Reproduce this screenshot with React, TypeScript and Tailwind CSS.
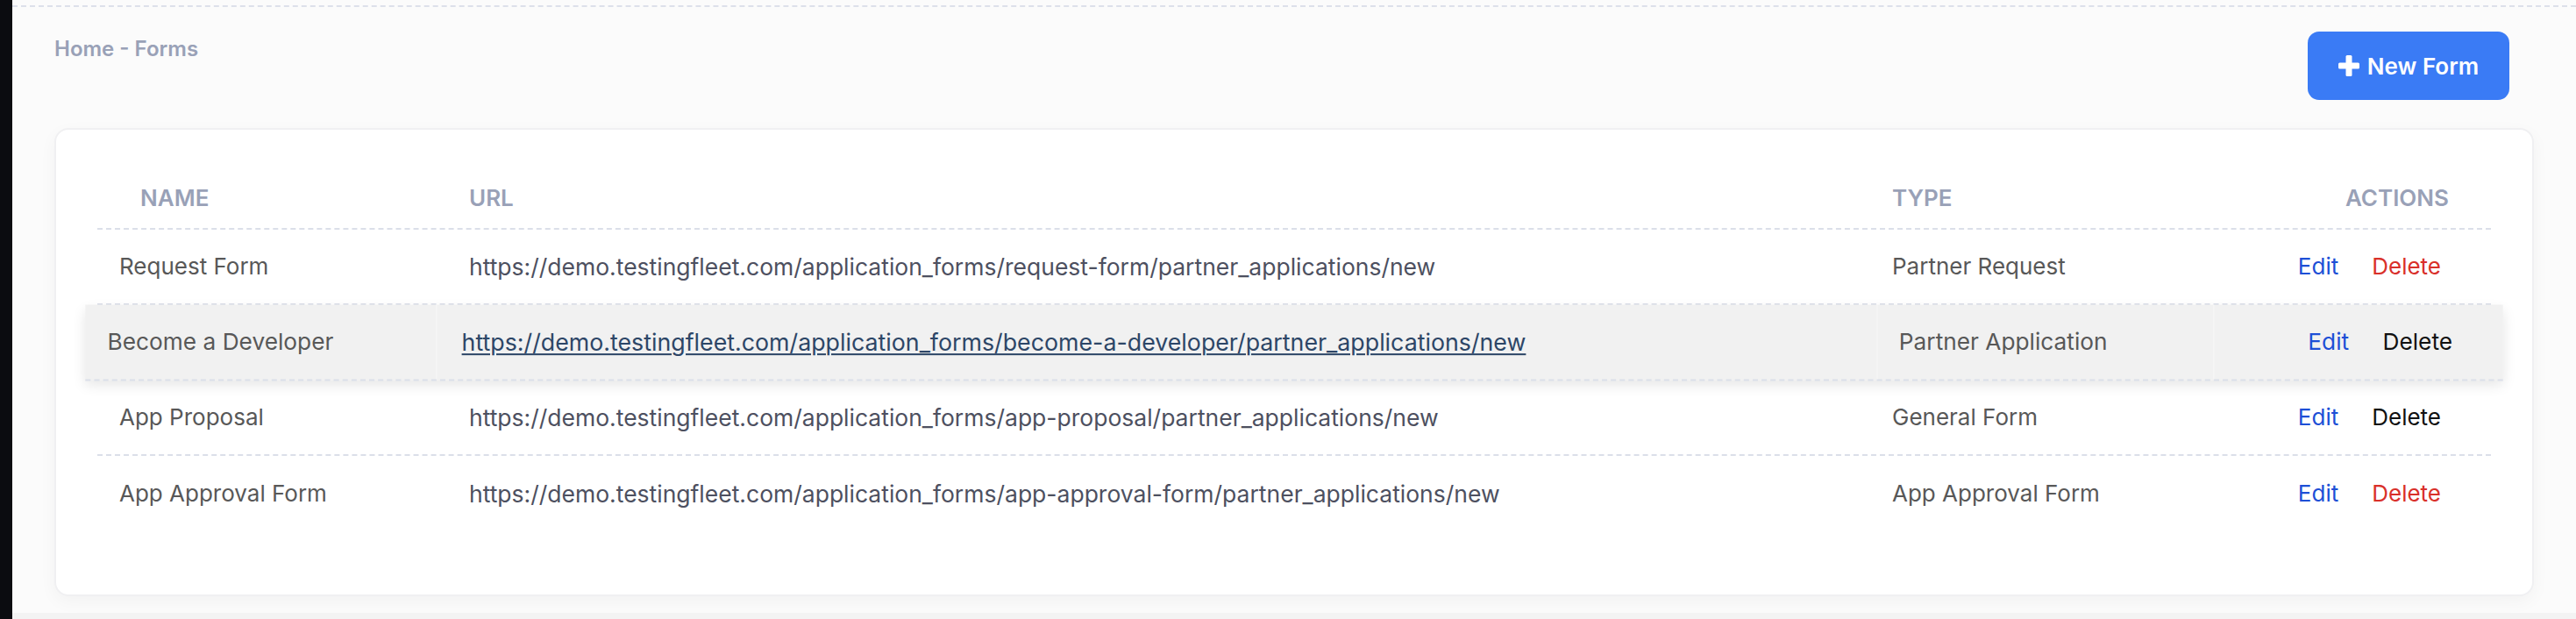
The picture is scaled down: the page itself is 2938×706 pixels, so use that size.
import React from "react";

type FormRow = {
  name: string;
  url: string;
  type: string;
  deleteTone: "red" | "black";
  active?: boolean;
};

const rows: FormRow[] = [
  {
    name: "Request Form",
    url: "https://demo.testingfleet.com/application_forms/request-form/partner_applications/new",
    type: "Partner Request",
    deleteTone: "red",
  },
  {
    name: "Become a Developer",
    url: "https://demo.testingfleet.com/application_forms/become-a-developer/partner_applications/new",
    type: "Partner Application",
    deleteTone: "black",
    active: true,
  },
  {
    name: "App Proposal",
    url: "https://demo.testingfleet.com/application_forms/app-proposal/partner_applications/new",
    type: "General Form",
    deleteTone: "black",
  },
  {
    name: "App Approval Form",
    url: "https://demo.testingfleet.com/application_forms/app-approval-form/partner_applications/new",
    type: "App Approval Form",
    deleteTone: "red",
  },
];

function PlusIcon() {
  return (
    <svg width="24" height="24" viewBox="0 0 24 24" aria-hidden="true">
      <rect x="8.5" y="0" width="7" height="24" rx="1.5" fill="#ffffff" />
      <rect x="0" y="8.5" width="24" height="7" rx="1.5" fill="#ffffff" />
    </svg>
  );
}

function Row({ row, last }: { row: FormRow; last: boolean }) {
  const base =
    "grid grid-cols-[396px_1627px_380px_326px] h-[86px] items-center text-[26px] leading-[32px]";
  const border = last ? "" : "border-b-2 border-dashed border-[#dbdfe9]";
  const active = row.active
    ? "bg-[#f1f1f1] scale-[1.01] shadow-[0_6px_14px_rgba(0,0,0,0.10)] relative z-10"
    : "";
  const cellDivider = row.active ? "border-l border-[#f7f7f7]" : "";

  return (
    <div className={`${base} ${border} ${active}`}>
      <div className="pl-[25px] h-full flex items-center text-[#585858]">{row.name}</div>
      <div className={`pl-[28px] h-full flex items-center text-[26.5px] ${cellDivider}`}>
        {row.active ? (
          <a className="text-[#2d4667] underline underline-offset-[3px] decoration-2">{row.url}</a>
        ) : (
          <span className="text-[#4d5060]">{row.url}</span>
        )}
      </div>
      <div className={`pl-[24px] h-full flex items-center text-[#585858] ${cellDivider}`}>
        {row.type}
      </div>
      <div className={`h-full flex items-center justify-end gap-[38px] pr-[56px] ${cellDivider}`}>
        <span className="text-[#1d4fd6]">Edit</span>
        <span className={row.deleteTone === "red" ? "text-[#d9302a]" : "text-[#111111]"}>
          Delete
        </span>
      </div>
    </div>
  );
}

export default function App() {
  return (
    <div className="flex w-[2938px] h-[706px] bg-[#fbfbfb] font-['Inter','Noto_Sans',sans-serif] overflow-hidden">
      {/* sidebar edge */}
      <div className="w-[14px] shrink-0 bg-[#0b0c10]" />

      <div className="flex-1 flex flex-col">
        <div className="h-[6px]" />
        <div className="border-t-2 border-dashed border-[#dde0ea]" />

        <main className="flex-1 flex flex-col px-[48px] pt-[28px]">
          {/* toolbar */}
          <div className="flex items-start justify-between">
            <div className="pt-[4px] text-[24px] leading-[32px] font-semibold text-[#99a1b7]">
              Home - Forms
            </div>
            <button className="flex items-center justify-center gap-[9px] w-[230px] h-[78px] mr-[28px] rounded-[13px] bg-[#3a7bf5] text-white text-[26px] font-semibold">
              <PlusIcon />
              <span>New Form</span>
            </button>
          </div>

          {/* forms card */}
          <div className="mt-[32px] h-[534px] rounded-[16px] border-2 border-[#f0f0f2] bg-white shadow-[0_6px_20px_rgba(0,0,0,0.04)] px-[47px] pt-[46px]">
            <div className="grid grid-cols-[396px_1627px_380px_326px] h-[68px] items-center border-b-2 border-dashed border-[#dbdfe9] text-[26px] leading-[32px] font-semibold uppercase text-[#99a1b7] pb-[2px]">
              <div className="pl-[49px]">Name</div>
              <div className="pl-[28px]">URL</div>
              <div className="pl-[24px]">Type</div>
              <div className="text-right pr-[47px]">Actions</div>
            </div>
            {rows.map((row, i) => (
              <Row key={row.name} row={row} last={i === rows.length - 1} />
            ))}
          </div>
        </main>

        <div className="h-[7px] bg-[#f3f3f3]" />
      </div>
    </div>
  );
}
